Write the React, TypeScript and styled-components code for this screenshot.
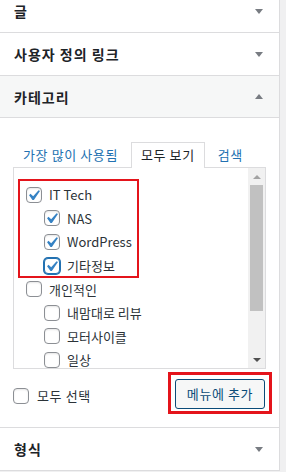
import styled, { createGlobalStyle } from "styled-components";

const GlobalStyle = createGlobalStyle`
  html, body {
    margin: 0;
    padding: 0;
  }
  body {
    background: #f0f0f1;
    font-family: "Noto Sans CJK KR", "Noto Sans", sans-serif;
    overflow: hidden;
  }
  * {
    box-sizing: border-box;
  }
  ul {
    list-style: none;
    margin: 0;
    padding: 0;
  }
`;

const Page = styled.div`
  height: 472px;
  overflow: hidden;
  display: flex;
  align-items: flex-start;
`;

// scrolled a little: the first section header is cut at the top
const Sidebar = styled.div`
  width: 280px;
  margin-top: -10px;
  background: #fff;
  border-right: 1px solid #dcdcde;
`;

const Section = styled.section`
  border-bottom: 1px solid #dcdcde;
`;

const SectionTitle = styled.h3<{ $open?: boolean }>`
  margin: 0;
  height: 42px;
  padding: 0 16px 0 14px;
  display: flex;
  align-items: center;
  justify-content: space-between;
  font-size: 14px;
  font-weight: 600;
  letter-spacing: 1px;
  color: #1d2327;
  background: ${(p) => (p.$open ? "#f6f7f7" : "#fff")};
  border-bottom: ${(p) => (p.$open ? "1px solid #dcdcde" : "none")};
`;

const Caret = styled.span<{ $up?: boolean }>`
  width: 0;
  height: 0;
  border-left: 4px solid transparent;
  border-right: 4px solid transparent;
  ${(p) =>
    p.$up ? "border-bottom: 5px solid #787c82;" : "border-top: 5px solid #787c82;"}
`;

const SectionBody = styled.div`
  padding: 24px 13px 18px 13px;
`;

const Tabs = styled.ul`
  display: flex;
  gap: 3px;
`;

const Tab = styled.li<{ $active?: boolean }>`
  position: relative;
  z-index: 1;
  margin-bottom: -1px;
  padding: 0 9px 1px;
  line-height: 24px;
  font-size: 13px;
  letter-spacing: 0.6px;
  border: 1px solid ${(p) => (p.$active ? "#dcdcde" : "transparent")};
  border-bottom: none;
  background: ${(p) => (p.$active ? "#fff" : "transparent")};
  color: ${(p) => (p.$active ? "#1d2327" : "#2271b1")};
`;

const TabPanel = styled.div`
  height: 202px;
  border: 1px solid #dcdcde;
  display: flex;
`;

const ChecklistArea = styled.div`
  flex: 1;
  overflow: hidden;
  padding: 15px 0 0 12px;
`;

const ChildList = styled.ul`
  margin-left: 18px;
`;

const Item = styled.li`
  position: relative;
`;

const Row = styled.label`
  height: 23.6px;
  display: flex;
  align-items: center;
  gap: 7px;
  font-size: 13px;
  color: #2c3338;
  white-space: nowrap;
`;

const Box = styled.span<{ $focus?: boolean }>`
  position: relative;
  flex: none;
  width: 16px;
  height: 16px;
  border: 1px solid ${(p) => (p.$focus ? "#2271b1" : "#8c8f94")};
  border-radius: 4px;
  background: #fff;
  box-shadow: ${(p) =>
    p.$focus ? "0 0 0 1px #2271b1" : "inset 0 1px 2px rgba(0, 0, 0, 0.1)"};
  svg {
    position: absolute;
    left: -4px;
    top: -3px;
    width: 21px;
    height: 21px;
  }
`;

const GroupMark = styled.span`
  position: absolute;
  top: -4px;
  left: -8px;
  width: 121px;
  height: 99px;
  border: 2px solid #e4141b;
  pointer-events: none;
`;

const Scrollbar = styled.div`
  width: 17px;
  flex: none;
  display: flex;
  flex-direction: column;
  background: #f1f1f1;
`;

const ScrollButton = styled.div<{ $down?: boolean }>`
  height: 17px;
  display: flex;
  align-items: center;
  justify-content: center;
  &::after {
    content: "";
    border-left: 4px solid transparent;
    border-right: 4px solid transparent;
    ${(p) =>
      p.$down ? "border-top: 4px solid #505050;" : "border-bottom: 4px solid #a3a3a3;"}
  }
`;

const ScrollTrack = styled.div`
  flex: 1;
  padding: 0 2px;
`;

const ScrollThumb = styled.div`
  height: 126px;
  background: #c1c1c1;
`;

const Footer = styled.div`
  margin-top: 10px;
  display: flex;
  justify-content: space-between;
  align-items: flex-start;
`;

const SelectAll = styled.label`
  margin-top: 9px;
  display: flex;
  align-items: center;
  gap: 8px;
  font-size: 13px;
  line-height: 16px;
  letter-spacing: 0.6px;
  color: #2c3338;
`;

const ButtonWrap = styled.span`
  position: relative;
  display: inline-flex;
  margin-right: 1px;
`;

const ButtonMark = styled.span`
  position: absolute;
  top: -7px;
  left: -7px;
  right: -7px;
  bottom: -5px;
  border: 3px solid #e4141b;
  pointer-events: none;
`;

const Button = styled.button`
  width: 90px;
  height: 30px;
  padding: 0;
  font-family: inherit;
  font-size: 13px;
  line-height: 28px;
  letter-spacing: 0.6px;
  color: #0a4b78;
  background: #f6f7f7;
  border: 1px solid #0a4b78;
  border-radius: 3px;
`;

type Cat = {
  name: string;
  checked?: boolean;
  focus?: boolean;
  mark?: boolean;
  children?: Cat[];
};

const categories: Cat[] = [
  {
    name: "IT Tech",
    checked: true,
    mark: true,
    children: [
      { name: "NAS", checked: true },
      { name: "WordPress", checked: true },
      { name: "기타정보", checked: true, focus: true },
    ],
  },
  {
    name: "개인적인",
    children: [{ name: "내맘대로 리뷰" }, { name: "모터사이클" }, { name: "일상" }],
  },
];

function Checkbox({ checked, focus }: { checked?: boolean; focus?: boolean }) {
  return (
    <Box $focus={focus}>
      {checked && (
        <svg viewBox="0 0 20 20" aria-hidden="true">
          <path
            d="M14.83 4.89l1.34.94-5.81 8.38H9.02L5.78 9.67l1.34-1.25 2.57 2.4z"
            fill="#3582c4"
          />
        </svg>
      )}
    </Box>
  );
}

function CategoryItem({ cat }: { cat: Cat }) {
  return (
    <Item>
      {cat.mark && <GroupMark />}
      <Row>
        <Checkbox checked={cat.checked} focus={cat.focus} />
        {cat.name}
      </Row>
      {cat.children && (
        <ChildList>
          {cat.children.map((c) => (
            <CategoryItem key={c.name} cat={c} />
          ))}
        </ChildList>
      )}
    </Item>
  );
}

function App() {
  return (
    <>
      <GlobalStyle />
      <Page>
        <Sidebar>
          <Section>
            <SectionTitle>
              글 <Caret />
            </SectionTitle>
          </Section>
          <Section>
            <SectionTitle>
              사용자 정의 링크 <Caret />
            </SectionTitle>
          </Section>
          <Section>
            <SectionTitle $open>
              카테고리 <Caret $up />
            </SectionTitle>
            <SectionBody>
              <Tabs>
                <Tab>가장 많이 사용됨</Tab>
                <Tab $active>모두 보기</Tab>
                <Tab>검색</Tab>
              </Tabs>
              <TabPanel>
                <ChecklistArea>
                  <ul>
                    {categories.map((c) => (
                      <CategoryItem key={c.name} cat={c} />
                    ))}
                  </ul>
                </ChecklistArea>
                <Scrollbar>
                  <ScrollButton />
                  <ScrollTrack>
                    <ScrollThumb />
                  </ScrollTrack>
                  <ScrollButton $down />
                </Scrollbar>
              </TabPanel>
              <Footer>
                <SelectAll>
                  <Checkbox />
                  모두 선택
                </SelectAll>
                <ButtonWrap>
                  <ButtonMark />
                  <Button>메뉴에 추가</Button>
                </ButtonWrap>
              </Footer>
            </SectionBody>
          </Section>
          <Section>
            <SectionTitle>
              형식 <Caret />
            </SectionTitle>
          </Section>
        </Sidebar>
      </Page>
    </>
  );
}

export default App;
